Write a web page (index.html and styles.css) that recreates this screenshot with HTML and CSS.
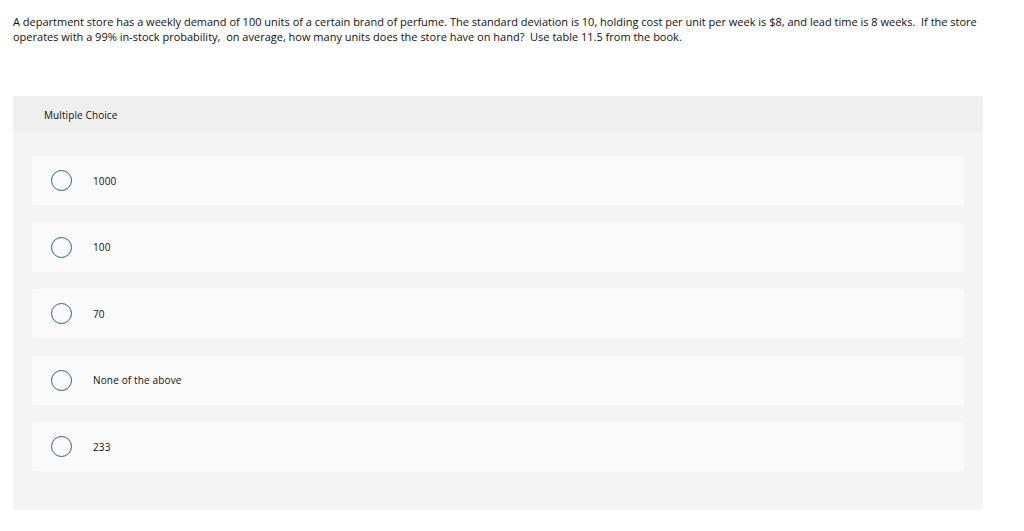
FILE: index.html
```html
<!DOCTYPE html>
<html>
<head>
<meta charset="utf-8">
<link rel="stylesheet" href="styles.css">
</head>
<body>
<div class="page">
  <p class="question">A department store has a weekly demand of 100 units of a certain brand of perfume. The standard deviation is 10, holding cost per unit per week is $8, and lead time is 8 weeks.&nbsp; If the store operates with a 99% in-stock probability,&nbsp; on average, how many units does the store have on hand?&nbsp; Use table 11.5 from the book.</p>
  <div class="panel">
    <div class="panel-head">Multiple Choice</div>
    <div class="panel-body">
      <div class="option"><span class="radio"></span><span class="label">1000</span></div>
      <div class="option"><span class="radio"></span><span class="label">100</span></div>
      <div class="option"><span class="radio"></span><span class="label">70</span></div>
      <div class="option"><span class="radio"></span><span class="label">None of the above</span></div>
      <div class="option"><span class="radio"></span><span class="label">233</span></div>
    </div>
  </div>
</div>
</body>
</html>
```
FILE: styles.css
```css
* { box-sizing: border-box; }
html, body { margin: 0; padding: 0; background: #fff; }
body {
  font-family: "Open Sans", "Liberation Sans", sans-serif;
  color: #111;
}
.page {
  padding: 14px 41px 0 13px;
}
.question {
  margin: 0;
  font-size: 11px;
  line-height: 15px;
  color: #111;
}
.panel {
  margin-top: 52px;
  width: 970px;
  border-radius: 2px;
  background: #f4f4f4;
  overflow: hidden;
}
.panel-head {
  height: 36px;
  background: #efefef;
  padding-left: 31px;
  padding-top: 2px;
  display: flex;
  align-items: center;
  font-size: 10px;
  letter-spacing: 0.1px;
  color: #111;
}
.panel-body {
  padding: 24px 19px 39px 19px;
  display: flex;
  flex-direction: column;
  gap: 17.6px;
}
.option {
  height: 49px;
  background: #fafafa;
  border-radius: 3px;
  display: flex;
  align-items: center;
  padding-left: 19px;
}
.radio {
  width: 21px;
  height: 21px;
  border: 1.3px solid #2d6196;
  border-radius: 50%;
  flex: none;
}
.label {
  margin-left: 21px;
  font-size: 10px;
  letter-spacing: 0.15px;
  color: #111;
}
```
